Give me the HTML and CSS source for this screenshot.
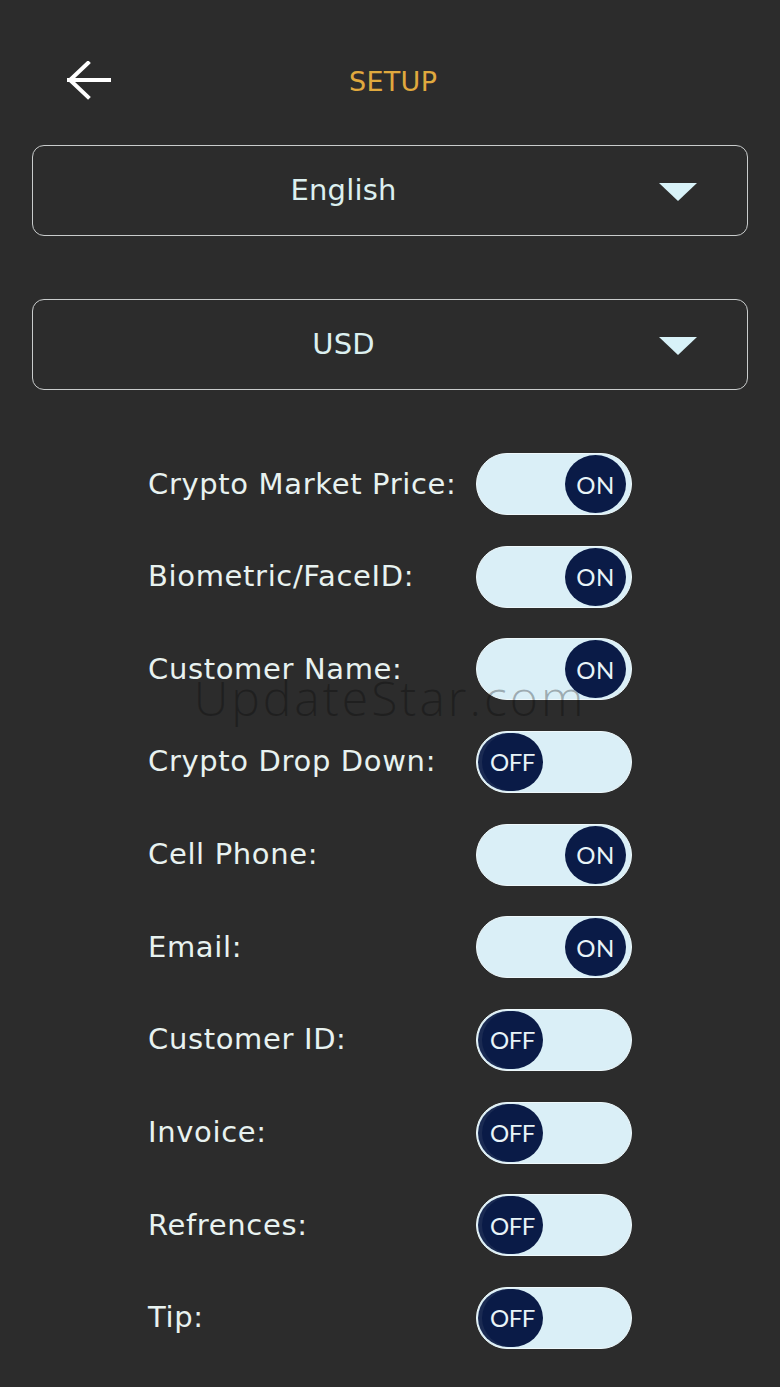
FILE: index.html
```html
<!DOCTYPE html>
<html lang="en">
<head>
<meta charset="utf-8">
<title>Setup</title>
<link rel="stylesheet" href="styles.css">
</head>
<body>
<div class="page">
  <header class="header">
    <button class="back" aria-label="Back">
      <svg width="44" height="40" viewBox="0 0 44 40"><path d="M2 19 H42 M21 2 L3 19 L21 36" fill="none" stroke="#ffffff" stroke-width="4" stroke-linecap="square" stroke-linejoin="miter"/></svg>
    </button>
    <h1 class="title">SETUP</h1>
  </header>

  <div class="select first">
    <span class="select-text">English</span>
    <span class="caret"></span>
  </div>
  <div class="select second">
    <span class="select-text">USD</span>
    <span class="caret"></span>
  </div>

  <div class="rows">
    <div class="row"><span class="label">Crypto Market Price:</span><span class="toggle on"><span class="knob">ON</span></span></div>
    <div class="row"><span class="label">Biometric/FaceID:</span><span class="toggle on"><span class="knob">ON</span></span></div>
    <div class="row"><span class="label">Customer Name:</span><span class="toggle on"><span class="knob">ON</span></span></div>
    <div class="row"><span class="label">Crypto Drop Down:</span><span class="toggle off"><span class="knob">OFF</span></span></div>
    <div class="row"><span class="label">Cell Phone:</span><span class="toggle on"><span class="knob">ON</span></span></div>
    <div class="row"><span class="label">Email:</span><span class="toggle on"><span class="knob">ON</span></span></div>
    <div class="row"><span class="label">Customer ID:</span><span class="toggle off"><span class="knob">OFF</span></span></div>
    <div class="row"><span class="label">Invoice:</span><span class="toggle off"><span class="knob">OFF</span></span></div>
    <div class="row"><span class="label">Refrences:</span><span class="toggle off"><span class="knob">OFF</span></span></div>
    <div class="row"><span class="label">Tip:</span><span class="toggle off"><span class="knob">OFF</span></span></div>
  </div>

  <div class="watermark">UpdateStar.com</div>
</div>
</body>
</html>
```

FILE: styles.css
```css
html, body {
  margin: 0;
  padding: 0;
  background: #2c2c2c;
}

.page {
  position: relative;
  width: 780px;
  height: 1387px;
  box-sizing: border-box;
  padding: 40px 32px 0 32px;
  font-family: "DejaVu Sans", "Open Sans", sans-serif;
  color: #e6f2f0;
  overflow: hidden;
}

.header {
  height: 82px;
  display: flex;
  align-items: center;
  position: relative;
}

.back {
  background: none;
  border: 0;
  padding: 0;
  margin-left: 35px;
  width: 44px;
  height: 40px;
  display: flex;
  align-items: center;
  justify-content: center;
  cursor: pointer;
}

.title {
  margin: 0 0 0 238px;
  font-family: "DejaVu Sans", sans-serif;
  font-size: 27px;
  font-weight: 400;
  color: #e0a93e;
  letter-spacing: 0.3px;
}

.select {
  height: 91px;
  box-sizing: border-box;
  border: 1.5px solid #c9cccc;
  border-radius: 12px;
  display: flex;
  align-items: center;
  padding-right: 50px;
}

.select.first { margin-top: 23px; }
.select.second { margin-top: 63px; }

.select-text {
  flex: 1;
  text-align: center;
  font-size: 29px;
  color: #dcf0f0;
  letter-spacing: 0.2px;
  margin-top: -2px;
}

.caret {
  margin-left: 5px;
  width: 0;
  height: 0;
  border-left: 19px solid transparent;
  border-right: 19px solid transparent;
  border-top: 18px solid #d8f2f8;
  margin-top: 2px;
}

.rows {
  margin-top: 63px;
  padding-left: 116px;
  display: flex;
  flex-direction: column;
  gap: 30.67px;
}

.row {
  display: grid;
  grid-template-columns: 328px 156px;
  align-items: center;
  height: 62px;
}

.label {
  font-size: 29px;
  letter-spacing: 0.65px;
  color: #e8f2f0;
  white-space: nowrap;
  margin-top: -1px;
}

.toggle {
  width: 156px;
  height: 62px;
  box-sizing: border-box;
  border-radius: 31px;
  background: #daeff7;
  border: 1px solid #eef8fb;
  display: flex;
  align-items: center;
  padding: 0 5px;
}

.toggle.on { justify-content: flex-end; }
.toggle.off { justify-content: flex-start; }

.knob {
  width: 61px;
  height: 58px;
  border-radius: 50%;
  background: #0a1b47;
  color: #e8f4f8;
  display: flex;
  align-items: center;
  justify-content: center;
  font-size: 24px;
  font-family: "Lato", "Open Sans", sans-serif;
  letter-spacing: 0.5px;
}

.toggle.off .knob {
  box-shadow: -4px 0 0 0 #1a2a52;
  letter-spacing: -0.5px;
}

.watermark {
  position: absolute;
  left: 0;
  right: 0;
  top: 665px;
  text-align: center;
  font-family: "Open Sans", sans-serif;
  font-size: 48px;
  font-weight: 300;
  color: rgba(0, 0, 0, 0.28);
  letter-spacing: 3px;
  pointer-events: none;
}
```
